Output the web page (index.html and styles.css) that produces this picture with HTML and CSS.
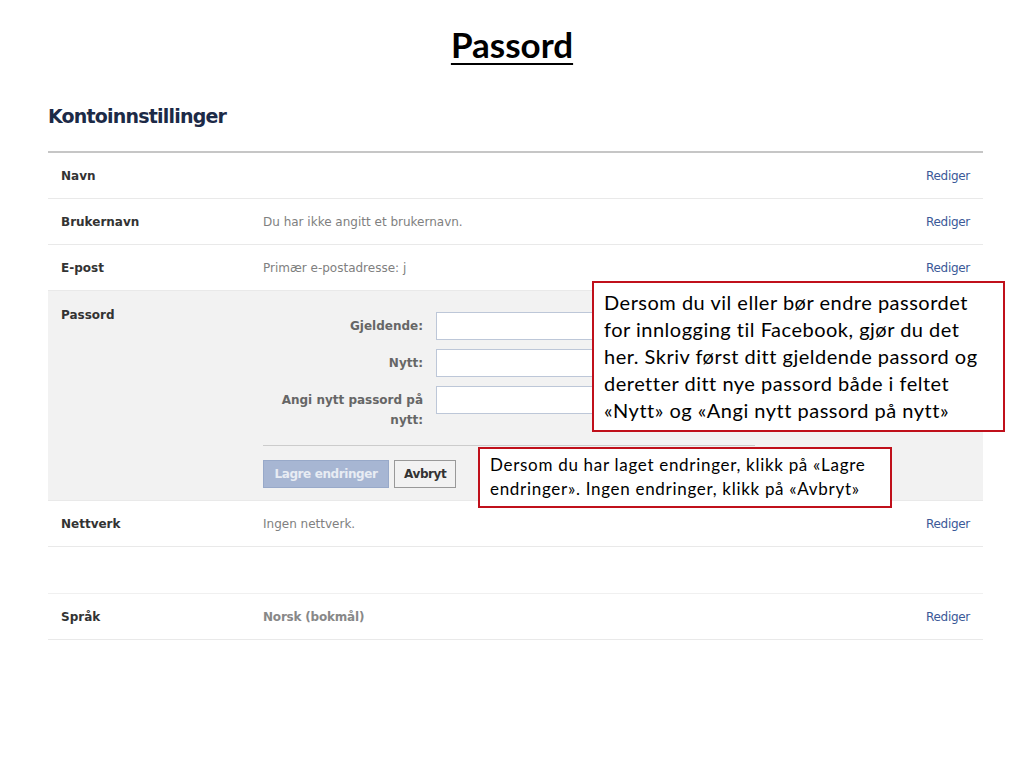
FILE: index.html
```html
<!DOCTYPE html>
<html lang="no">
<head>
    <meta charset="UTF-8">
    <title>Passord</title>
    <link rel="stylesheet" href="styles.css">
</head>
<body>
    <h1 class="title">Passord</h1>

    <div class="settings">
        <h2 class="heading">Kontoinnstillinger</h2>
        <div class="table">
            <div class="row">
                <div class="label">Navn</div>
                <div class="value"></div>
                <a class="edit" href="#">Rediger</a>
            </div>
            <div class="row">
                <div class="label">Brukernavn</div>
                <div class="value">Du har ikke angitt et brukernavn.</div>
                <a class="edit" href="#">Rediger</a>
            </div>
            <div class="row">
                <div class="label">E-post</div>
                <div class="value">Primær e-postadresse: j</div>
                <a class="edit" href="#">Rediger</a>
            </div>
            <div class="row open">
                <div class="label">Passord</div>
                <div class="pwform">
                    <div class="field">
                        <label for="cur">Gjeldende:</label>
                        <input type="password" id="cur">
                    </div>
                    <div class="field">
                        <label for="new">Nytt:</label>
                        <input type="password" id="new">
                    </div>
                    <div class="field">
                        <label for="again">Angi nytt passord på nytt:</label>
                        <input type="password" id="again">
                    </div>
                    <div class="actions">
                        <button class="save" type="button" disabled>Lagre endringer</button>
                        <button class="cancel" type="button">Avbryt</button>
                    </div>
                </div>
            </div>
            <div class="row">
                <div class="label">Nettverk</div>
                <div class="value">Ingen nettverk.</div>
                <a class="edit" href="#">Rediger</a>
            </div>
            <div class="row spacer"></div>
            <div class="row">
                <div class="label">Språk</div>
                <div class="value strong">Norsk (bokmål)</div>
                <a class="edit" href="#">Rediger</a>
            </div>
        </div>
    </div>

    <div class="note note-pw">
        Dersom du vil eller bør endre passordet<br>
        for innlogging til Facebook, gjør du det<br>
        her. Skriv først ditt gjeldende passord og<br>
        deretter ditt nye passord både i feltet<br>
        «Nytt» og «Angi nytt passord på nytt»
    </div>
    <div class="note note-save">
        Dersom du har laget endringer, klikk på «Lagre<br>
        endringer». Ingen endringer, klikk på «Avbryt»
    </div>
</body>
</html>
```

FILE: styles.css
```css
body {
    margin: 0;
    padding: 0;
    background: #fff;
    font-family: "DejaVu Sans", Verdana, sans-serif;
    position: relative;
    min-height: 768px;
}

.title {
    margin: 0;
    padding-top: 24px;
    text-align: center;
    font-family: Lato, "Liberation Sans", sans-serif;
    font-size: 35px;
    font-weight: bold;
    text-decoration: underline;
    text-decoration-thickness: 2px;
    text-underline-offset: 5px;
    color: #000;
    line-height: 40px;
}

.settings {
    margin: 0 41px 0 48px;
}

.heading {
    margin: 40px 0 23px;
    font-size: 19px;
    font-weight: bold;
    color: #1c2a47;
    letter-spacing: -0.8px;
    line-height: 24px;
}

.table {
    border-top: 2px solid #c6c6c6;
}

.row {
    display: grid;
    grid-template-columns: 202px 1fr auto;
    align-items: center;
    height: 45px;
    padding: 0 13px;
    border-bottom: 1px solid #e9e9e9;
    font-size: 12px;
}

.label {
    font-weight: bold;
    color: #333;
}

.value {
    color: #808080;
}

.value.strong {
    font-weight: bold;
    color: #888;
    letter-spacing: -0.2px;
}

.edit {
    color: #3b5998;
    text-decoration: none;
    letter-spacing: -0.3px;
}

.row.open {
    height: auto;
    align-items: start;
    background: #f2f2f2;
    padding-top: 17px;
    padding-bottom: 12px;
}

.row.spacer {
    height: 46px;
    border-bottom-color: #f0f0f0;
}

.pwform {
    display: flex;
    flex-direction: column;
    gap: 9px;
    padding-top: 4px;
}

.field {
    display: grid;
    grid-template-columns: 160px 180px;
    column-gap: 13px;
    align-items: start;
}

.field label {
    text-align: right;
    font-weight: bold;
    color: #666;
    line-height: 20px;
    padding-top: 4px;
}

.field input {
    height: 28px;
    box-sizing: border-box;
    border: 1px solid #bdc7d8;
    background: #fff;
    margin: 0;
}

.actions {
    margin-top: 6px;
    width: 492px;
    border-top: 1px solid #ccc;
    padding-top: 14px;
    display: flex;
    gap: 5px;
}

.actions button {
    height: 28px;
    font-family: "DejaVu Sans", Verdana, sans-serif;
    font-size: 12px;
    font-weight: bold;
    letter-spacing: -0.4px;
    padding: 0 9px;
}

.save {
    width: 126px;
    background: #a7b6d3;
    border: 1px solid #98a9c9;
    color: #e8ecf3;
}

.cancel {
    width: 62px;
    background: #f2f2f2;
    border: 1px solid #999;
    color: #333;
}

.note {
    position: absolute;
    background: #fff;
    border: 2px solid #c0101b;
    font-family: Lato, "Liberation Sans", sans-serif;
    color: #000;
    box-sizing: border-box;
}

.note-pw {
    left: 592px;
    top: 281px;
    width: 413px;
    height: 151px;
    padding: 6px 10px;
    font-size: 20px;
    letter-spacing: 0.5px;
    line-height: 27px;
}

.note-save {
    left: 478px;
    top: 447px;
    width: 414px;
    height: 61px;
    padding: 4px 10px;
    font-size: 17px;
    letter-spacing: 0.7px;
    line-height: 24px;
}
```
